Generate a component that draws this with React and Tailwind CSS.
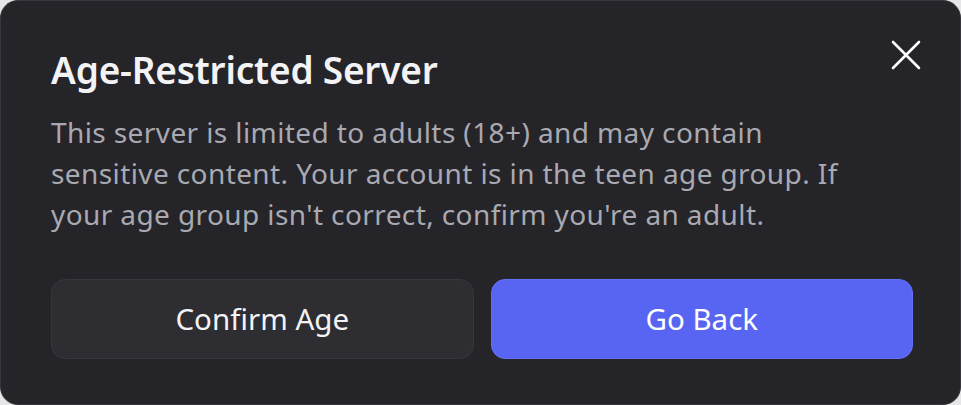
import React from 'react'

export default function App() {
  return (
    <div className="w-[961px] h-[405px] bg-[#e6e6e8]" style={{ fontFamily: '"Noto Sans", "Open Sans", sans-serif' }}>
      <div className="relative w-full h-full rounded-[18px] bg-[#242429] border border-[#36363c] pl-[50px] pr-[47px] pt-[47px]">
        {/* Close */}
        <button className="absolute right-[38px] top-[38px] w-[32px] h-[32px] flex items-center justify-center text-white">
          <svg width="32" height="32" viewBox="0 0 32 32" fill="none">
            <path d="M3 3 L29 29 M29 3 L3 29" stroke="currentColor" strokeWidth="2.6" strokeLinecap="round" />
          </svg>
        </button>

        <h2 className="text-[37px] leading-[44px] font-semibold text-[#f3f3f5] tracking-[-0.2px]">
          Age-Restricted Server
        </h2>
        <p className="mt-[20px] text-[28px] leading-[41px] tracking-[0.4px] text-[#a9a9b1] whitespace-nowrap">
          This server is limited to adults (18+) and may contain<br />
          sensitive content. Your account is in the teen age group. If<br />
          your age group isn't correct, confirm you're an adult.
        </p>

        <div className="mt-[44px] grid grid-cols-2 gap-[17px]">
          <button className="h-[80px] rounded-[14px] bg-[#2d2d32] border border-[#36363c] text-[29.5px] text-[#f3f3f5]">
            Confirm Age
          </button>
          <button className="h-[80px] rounded-[14px] bg-[#5865f2] border border-[#6571f5] text-[29.5px] text-white">
            Go Back
          </button>
        </div>
      </div>
    </div>
  )
}
